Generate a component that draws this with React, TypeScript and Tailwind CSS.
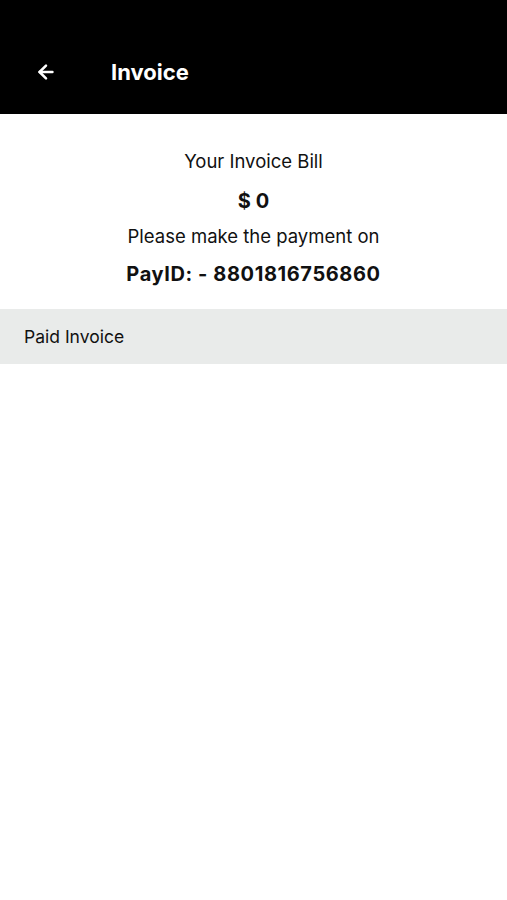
import { ArrowLeft } from "lucide-react";

export default function App() {
  return (
    <div className="min-h-[900px] w-full bg-white font-['Inter','Roboto',sans-serif] text-[#111]">
      <header className="flex h-[114px] items-end bg-black pb-[31px] text-white">
        <div className="flex w-[111px] justify-center pr-[20px]">
          <ArrowLeft className="h-[22px] w-[22px]" strokeWidth={2.75} />
        </div>
        <h1 className="text-[22px] font-bold leading-none">Invoice</h1>
      </header>

      <section className="flex flex-col items-center pt-[36px] pb-[23px] text-center">
        <p className="text-[18.5px] leading-[22px]">Your Invoice Bill</p>
        <p className="mt-[17px] text-[20px] font-bold leading-[24px]">$ 0</p>
        <p className="mt-[12px] text-[18.5px] leading-[22px]">Please make the payment on</p>
        <p className="mt-[15px] text-[20px] font-bold leading-[24px] tracking-[0.03em]">PayID: - 8801816756860</p>
      </section>

      <div className="flex h-[55px] items-center bg-[#e9ebea] px-[24px]">
        <span className="text-[17.5px] leading-none">Paid Invoice</span>
      </div>
    </div>
  );
}
